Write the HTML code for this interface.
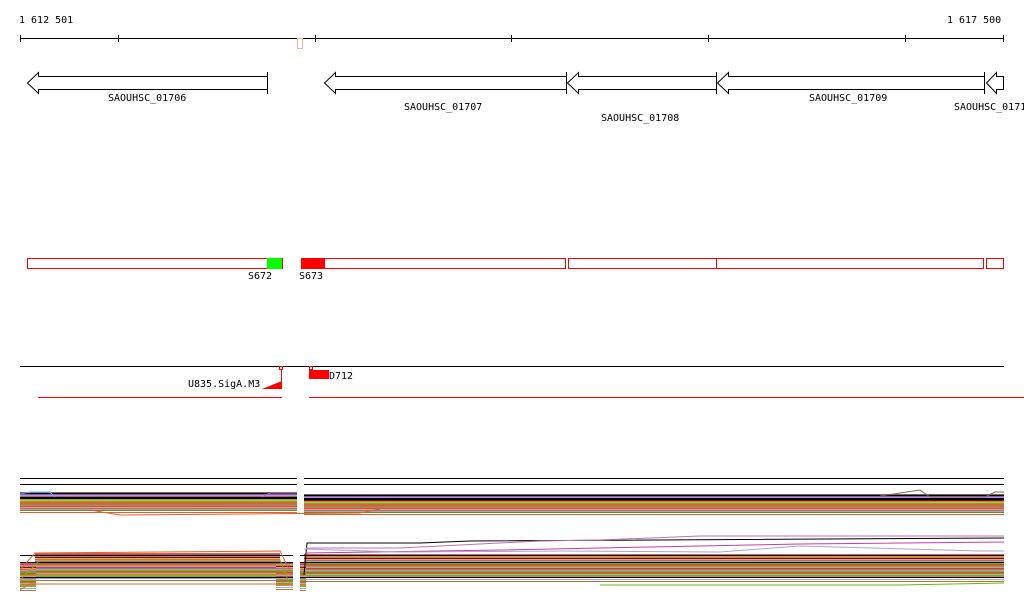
<!DOCTYPE html>
<html><head><meta charset="utf-8"><style>
html,body{margin:0;padding:0;background:#fff;width:1024px;height:611px;overflow:hidden}
svg{display:block}
text{font-family:"DejaVu Sans Mono","Liberation Mono",monospace;font-size:10px;fill:#000}
</style></head><body>
<svg width="1024" height="611" viewBox="0 0 1024 611" xmlns="http://www.w3.org/2000/svg">
<defs>
<g id="s1">
<rect y="0" width="1" height="1" fill="#806060"/>
<rect y="1" width="1" height="1" fill="#000"/>
<rect y="2" width="1" height="1" fill="#c040a0"/>
<rect y="3" width="1" height="1" fill="#80b0f0"/>
<rect y="4" width="1" height="1" fill="#a07060"/>
<rect y="5" width="1" height="1" fill="#e06030"/>
<rect y="6" width="1" height="1" fill="#800040"/>
<rect y="7" width="1" height="1" fill="#a0a020"/>
<rect y="8" width="1" height="1" fill="#f0a060"/>
<rect y="9" width="1" height="1" fill="#60c000"/>
<rect y="10" width="1" height="1" fill="#c07030"/>
<rect y="11" width="1" height="1" fill="#e06030"/>
<rect y="12" width="1" height="1" fill="#c060a0"/>
<rect y="13" width="1" height="1" fill="#a0a020"/>
<rect y="14" width="1" height="1" fill="#d05050"/>
<rect y="15" width="1" height="1" fill="#f0a060"/>
<rect y="16" width="1" height="1" fill="#c07030"/>
<rect y="17" width="1" height="1" fill="#80b0f0"/>
<rect y="18" width="1" height="1" fill="#808020"/>
<rect y="20" width="1" height="1" fill="#e06030"/>
</g>
<g id="s2">
<rect y="0" width="1" height="1" fill="#e06030"/>
<rect y="1" width="1" height="1" fill="#c040a0"/>
<rect y="2" width="1" height="1" fill="#d09080"/>
<rect y="3" width="1" height="1" fill="#a0a020"/>
<rect y="4" width="1" height="1" fill="#800040"/>
<rect y="5" width="1" height="1" fill="#f0a060"/>
<rect y="6" width="1" height="1" fill="#e06030"/>
<rect y="7" width="1" height="1" fill="#80b0f0"/>
<rect y="8" width="1" height="1" fill="#c07030"/>
<rect y="9" width="1" height="1" fill="#60c000"/>
<rect y="10" width="1" height="1" fill="#a06030"/>
<rect y="11" width="1" height="1" fill="#e06030"/>
<rect y="12" width="1" height="1" fill="#a0a020"/>
<rect y="13" width="1" height="1" fill="#d090c0"/>
<rect y="14" width="1" height="1" fill="#c04060"/>
<rect y="15" width="1" height="1" fill="#c07030"/>
<rect y="16" width="1" height="1" fill="#80b0f0"/>
<rect y="17" width="1" height="1" fill="#a0a020"/>
<rect y="18" width="1" height="1" fill="#808020"/>
<rect y="19" width="1" height="1" fill="#e06030"/>
<rect y="20" width="1" height="1" fill="#c0a0c0"/>
<rect y="21" width="1" height="1" fill="#60c000"/>
<rect y="22" width="1" height="1" fill="#e08050"/>
<rect y="23" width="1" height="1" fill="#a0a020"/>
<rect y="25" width="1" height="1" fill="#80b0f0"/>
<rect y="27" width="1" height="1" fill="#c07030"/>
</g>
</defs>
<!-- axis -->
<text x="19" y="23">1 612 501</text>
<text x="947" y="23">1 617 500</text>
<g stroke="#000" stroke-width="1" shape-rendering="crispEdges">
<line x1="20" y1="38.5" x2="1004" y2="38.5"/>
<line x1="20.5" y1="35" x2="20.5" y2="42"/>
<line x1="118.5" y1="35" x2="118.5" y2="42"/>
<line x1="315.5" y1="35" x2="315.5" y2="42"/>
<line x1="511.5" y1="35" x2="511.5" y2="42"/>
<line x1="708.5" y1="35" x2="708.5" y2="42"/>
<line x1="905.5" y1="35" x2="905.5" y2="42"/>
<line x1="1003.5" y1="35" x2="1003.5" y2="42"/>
</g>
<rect x="297.5" y="38.5" width="5" height="10" fill="#fff" stroke="#f0b0a0"/>
<!-- genes -->
<g fill="#fff" stroke="#000" stroke-width="1">
<path d="M267.5 76.5 H38.5 V72.5 L27.5 83 L38.5 93.5 V89.5 H267.5 Z"/>
<line x1="267.5" y1="72" x2="267.5" y2="94"/>
<path d="M566.5 76.5 H335.5 V72.5 L324.5 83 L335.5 93.5 V89.5 H566.5 Z"/>
<line x1="566.5" y1="72" x2="566.5" y2="94"/>
<path d="M716.5 76.5 H578.5 V72.5 L567.5 83 L578.5 93.5 V89.5 H716.5 Z"/>
<line x1="716.5" y1="72" x2="716.5" y2="94"/>
<path d="M984.5 76.5 H728.5 V72.5 L717.5 83 L728.5 93.5 V89.5 H984.5 Z"/>
<line x1="984.5" y1="72" x2="984.5" y2="94"/>
<path d="M1003.5 76.5 H996.5 V72.5 L986.5 83 L996.5 93.5 V89.5 H1003.5 Z"/>
</g>
<text x="108" y="101">SAOUHSC_01706</text>
<text x="404" y="110">SAOUHSC_01707</text>
<text x="601" y="121">SAOUHSC_01708</text>
<text x="809" y="101">SAOUHSC_01709</text>
<text x="954" y="110">SAOUHSC_0171</text>
<!-- red boxes -->
<g fill="none" stroke="#f00" shape-rendering="crispEdges">
<rect x="27.5" y="258.5" width="255" height="10"/>
<rect x="301.5" y="258.5" width="264" height="10"/>
<rect x="568.5" y="258.5" width="415" height="10"/>
<line x1="716.5" y1="258" x2="716.5" y2="269"/>
<rect x="986.5" y="258.5" width="17" height="10"/>
</g>
<rect x="267" y="258" width="15" height="11" fill="#0f0"/>
<rect x="301" y="258" width="24" height="11" fill="#f00"/>
<text x="248" y="279">S672</text>
<text x="299" y="279">S673</text>
<!-- feature track -->
<rect x="20" y="366" width="984" height="1" fill="#000"/>
<rect x="279.5" y="366.5" width="3" height="3" fill="#fff" stroke="#f00"/>
<rect x="281" y="369" width="1" height="20" fill="#f00"/>
<polygon points="262,389 282,389 282,381" fill="#f00"/>
<text x="188" y="387">U835.SigA.M3</text>
<rect x="309.5" y="366.5" width="3" height="3" fill="#fff" stroke="#f00"/>
<rect x="309" y="370" width="20" height="9" fill="#f00"/>
<text x="329" y="379">D712</text>
<rect x="38" y="397" width="244" height="1" fill="#f00"/>
<rect x="309" y="397" width="715" height="1" fill="#f00"/>
<!-- plots -->
<g fill="#000">
<rect x="20" y="478" width="277" height="1"/>
<rect x="20" y="484" width="277" height="1"/>
<rect x="304" y="478" width="700" height="1"/>
<rect x="304" y="484" width="700" height="1"/>
</g>
<use href="#s1" transform="translate(20,492) scale(277,1)"/>
<use href="#s1" transform="translate(304,494) scale(700,1)"/>
<rect x="20" y="497" width="277" height="2" fill="#000"/>
<rect x="304" y="498" width="700" height="2" fill="#000"/>
<g fill="none">
<polyline points="20,494 30,492 50,492 55,497" stroke="#60b0f0"/>
<polyline points="262,497 270,493 297,493" stroke="#c070b0"/>
<polyline points="880,496 920,490 930,497 985,497 995,492 1004,492" stroke="#806060"/>
<polyline points="90,510 120,515 360,513 380,509" stroke="#e06030"/>
</g>
<use href="#s2" transform="translate(35,553) scale(245,1)"/>
<use href="#s2" transform="translate(20,563) scale(16,1)"/>
<use href="#s2" transform="translate(276,562) scale(17,1)"/>
<use href="#s2" transform="translate(304,554) scale(700,1)"/>
<use href="#s2" transform="translate(300,563) scale(6,1)"/>
<g fill="#000">
<rect x="20" y="555" width="273" height="1"/>
<rect x="20" y="562" width="273" height="1"/>
<rect x="20" y="577" width="273" height="1"/>
<rect x="300" y="555" width="704" height="1"/>
<rect x="300" y="562" width="704" height="1"/>
<rect x="300" y="577" width="704" height="1"/>
</g>
<g fill="none">
<polyline points="304,575 307,543 420,543 470,541 1004,538" stroke="#000"/>
<polyline points="306,548 400,548 460,545 540,541 600,540 700,536 1004,536" stroke="#c070b0"/>
<polyline points="306,553 500,550 650,547 800,544 1004,542" stroke="#c040a0"/>
<polyline points="304,549 400,552 560,551 720,552 800,546 980,551 1004,551" stroke="#b0a0d0"/>
<polyline points="20,570 35,553 280,551 292,575" stroke="#e06030"/>
<polyline points="20,580 40,560 280,560 290,585" stroke="#a0a020"/>
<polyline points="20,590 30,584 290,584" stroke="#c07030"/>
<polyline points="600,585 900,585 1004,583" stroke="#60c000"/>
</g>
</svg>
</body></html>
